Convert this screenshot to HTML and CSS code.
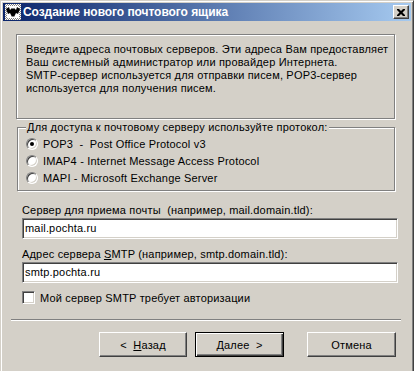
FILE: index.html
```html
<!DOCTYPE html>
<html lang="ru">
<head>
  <meta charset="UTF-8" />
  <meta name="viewport" content="width=device-width, initial-scale=1.0" />
  <title>Создание нового почтового ящика</title>
  <link rel="stylesheet" href="styles.css">
</head>
<body>
  <div class="window">
    <div class="titlebar">
      <svg class="app-icon" width="16" height="16" viewBox="0 0 16 16">
        <defs>
          <pattern id="dots" width="2" height="2" patternUnits="userSpaceOnUse">
            <rect width="2" height="2" fill="#fff" />
            <rect width="1" height="1" fill="#808080" />
            <rect x="1" y="1" width="1" height="1" fill="#808080" />
          </pattern>
        </defs>
        <rect width="16" height="16" fill="url(#dots)" />
        <rect x="2" y="2" width="12" height="12" fill="#fff" />
        <path d="M1 5 L4 3 L5 6 L7 4 L8 5 L9 4 L11 6 L12 3 L15 5 L13 10 L11 9 L9 13 L8 12 L7 13 L5 9 L3 10 Z" fill="#000" />
      </svg>
      <span class="title">Создание нового почтового ящика</span>
      <div class="close-btn">
        <svg width="8" height="7" viewBox="0 0 8 7">
          <path d="M0 0h2l2 2 2-2h2v1l-2.5 2.5L8 6v1H6L4 5 2 7H0V6l2.5-2.5L0 1z" fill="#000" />
        </svg>
      </div>
    </div>

    <div class="content">
      <div class="intro">
        Введите адреса почтовых серверов. Эти адреса Вам предоставляет<br>
        Ваш системный администратор или провайдер Интернета.<br>
        SMTP-сервер используется для отправки писем, POP3-сервер<br>
        используется для получения писем.
      </div>

      <div class="group">
        <div class="legend">Для доступа к почтовому серверу используйте протокол:</div>
        <div class="option first"><span class="radio checked"></span>POP3&nbsp; - &nbsp;Post Office Protocol v3</div>
        <div class="option"><span class="radio"></span>IMAP4 - Internet Message Access Protocol</div>
        <div class="option"><span class="radio"></span>MAPI - Microsoft Exchange Server</div>
      </div>

      <div class="field-label first">Сервер для приема почты&nbsp; (например, mail.domain.tld):</div>
      <div class="textbox">mail.pochta.ru</div>

      <div class="field-label">Адрес сервера <u>S</u>MTP (например, smtp.domain.tld):</div>
      <div class="textbox">smtp.pochta.ru</div>

      <div class="check-row"><span class="checkbox"></span>Мой сервер SMTP требует авторизации</div>
    </div>

    <div class="separator"></div>

    <div class="buttons">
      <div class="btn back">&lt;&nbsp; <u>Н</u>азад</div>
      <div class="btn default"><u>Д</u>алее&nbsp; &gt;</div>
      <div class="btn cancel">Отмена</div>
    </div>
  </div>
</body>
</html>
```

FILE: styles.css
```css
body {
  margin: 0;
  background: #d4d0c8;
  font-family: 'Liberation Sans', Arial, sans-serif;
  font-size: 11px;
  letter-spacing: 0.18px;
  color: #000;
  overflow: hidden;
}
.window {
  width: 414px;
  height: 380px;
  box-sizing: border-box;
  border-top: 1px solid #d4d0c8;
  border-left: 1px solid #d4d0c8;
  border-right: 1px solid #404040;
  box-shadow: inset 1px 1px 0 #fff, inset -1px 0 0 #808080;
  padding: 2px 2px 0 2px;
}
.titlebar {
  height: 18px;
  display: flex;
  align-items: center;
  background: linear-gradient(to right, #0a246a, #a6caf0);
  padding-left: 2px;
}
.app-icon {
  flex: none;
}
.title {
  flex: 1;
  margin-left: 2px;
  color: #fff;
  font-weight: bold;
  font-size: 12px;
  letter-spacing: -0.06px;
  white-space: nowrap;
}
.close-btn {
  width: 16px;
  height: 14px;
  box-sizing: border-box;
  margin-right: 2px;
  background: #d4d0c8;
  border: 1px solid;
  border-color: #fff #404040 #404040 #fff;
  box-shadow: inset -1px -1px 0 #808080;
  display: flex;
  align-items: center;
  justify-content: center;
}
.close-btn svg {
  display: block;
  margin-left: -1px;
}
.content {
  padding: 13px 0 0 13px;
}
.intro {
  width: 379px;
  height: 85px;
  box-sizing: border-box;
  border: 1px solid #808080;
  box-shadow: inset 1px 1px 0 #fff, 1px 1px 0 #fff;
  padding: 8px 9px;
  line-height: 13px;
  white-space: nowrap;
}
.group {
  width: 378px;
  height: 64px;
  box-sizing: border-box;
  margin: 8px 0 0 1px;
  border: 1px solid #808080;
  box-shadow: inset 1px 1px 0 #fff, 1px 1px 0 #fff;
  padding: 0 0 0 8px;
}
.legend {
  width: fit-content;
  margin: -7px 0 0 0;
  padding: 0 2px 0 1px;
  height: 13px;
  line-height: 13px;
  background: #d4d0c8;
}
.option {
  display: flex;
  align-items: center;
  height: 16px;
  margin-top: 1px;
  white-space: pre;
}
.option.first {
  margin-top: 2px;
}
.radio {
  flex: none;
  width: 12px;
  height: 12px;
  box-sizing: border-box;
  margin-right: 5px;
  border-radius: 50%;
  border: 1px solid;
  border-color: #808080 #fff #fff #808080;
  box-shadow: inset 1px 1px 0 #404040, inset -1px -1px 0 #d4d0c8;
  background: #fff;
  display: flex;
  align-items: center;
  justify-content: center;
}
.radio.checked::after {
  content: "";
  width: 4px;
  height: 4px;
  border-radius: 50%;
  background: #000;
}
.field-label {
  margin: 9px 0 0 6px;
  line-height: 13px;
}
.field-label.first {
  margin-top: 13px;
}
.textbox {
  width: 376px;
  height: 21px;
  box-sizing: border-box;
  margin: 1px 0 0 6px;
  border: 1px solid;
  border-color: #808080 #fff #fff #808080;
  box-shadow: inset 1px 1px 0 #404040, inset -1px -1px 0 #d4d0c8;
  background: #fff;
  padding: 0 2px;
  line-height: 19px;
}
.check-row {
  display: flex;
  align-items: center;
  height: 13px;
  margin: 8px 0 0 6px;
}
.checkbox {
  flex: none;
  width: 13px;
  height: 13px;
  box-sizing: border-box;
  margin-right: 5px;
  border: 1px solid;
  border-color: #808080 #fff #fff #808080;
  box-shadow: inset 1px 1px 0 #404040, inset -1px -1px 0 #d4d0c8;
  background: #fff;
}
.separator {
  margin: 15px 0 0 8px;
  width: 390px;
  height: 1px;
  background: #808080;
  box-shadow: 0 1px 0 #fff;
}
.buttons {
  display: flex;
  margin: 12px 0 0 96px;
}
.btn {
  width: 89px;
  height: 25px;
  box-sizing: border-box;
  border: 1px solid;
  border-color: #fff #404040 #404040 #fff;
  box-shadow: inset -1px -1px 0 #808080;
  display: flex;
  align-items: center;
  justify-content: center;
  white-space: pre;
}
.btn.back {
  width: 88px;
}
.btn.default {
  margin-left: 8px;
  border: 1px solid #000;
  box-shadow: inset 1px 1px 0 #fff, inset -1px -1px 0 #404040, inset -2px -2px 0 #808080;
}
.btn.cancel {
  margin-left: 23px;
}
```
